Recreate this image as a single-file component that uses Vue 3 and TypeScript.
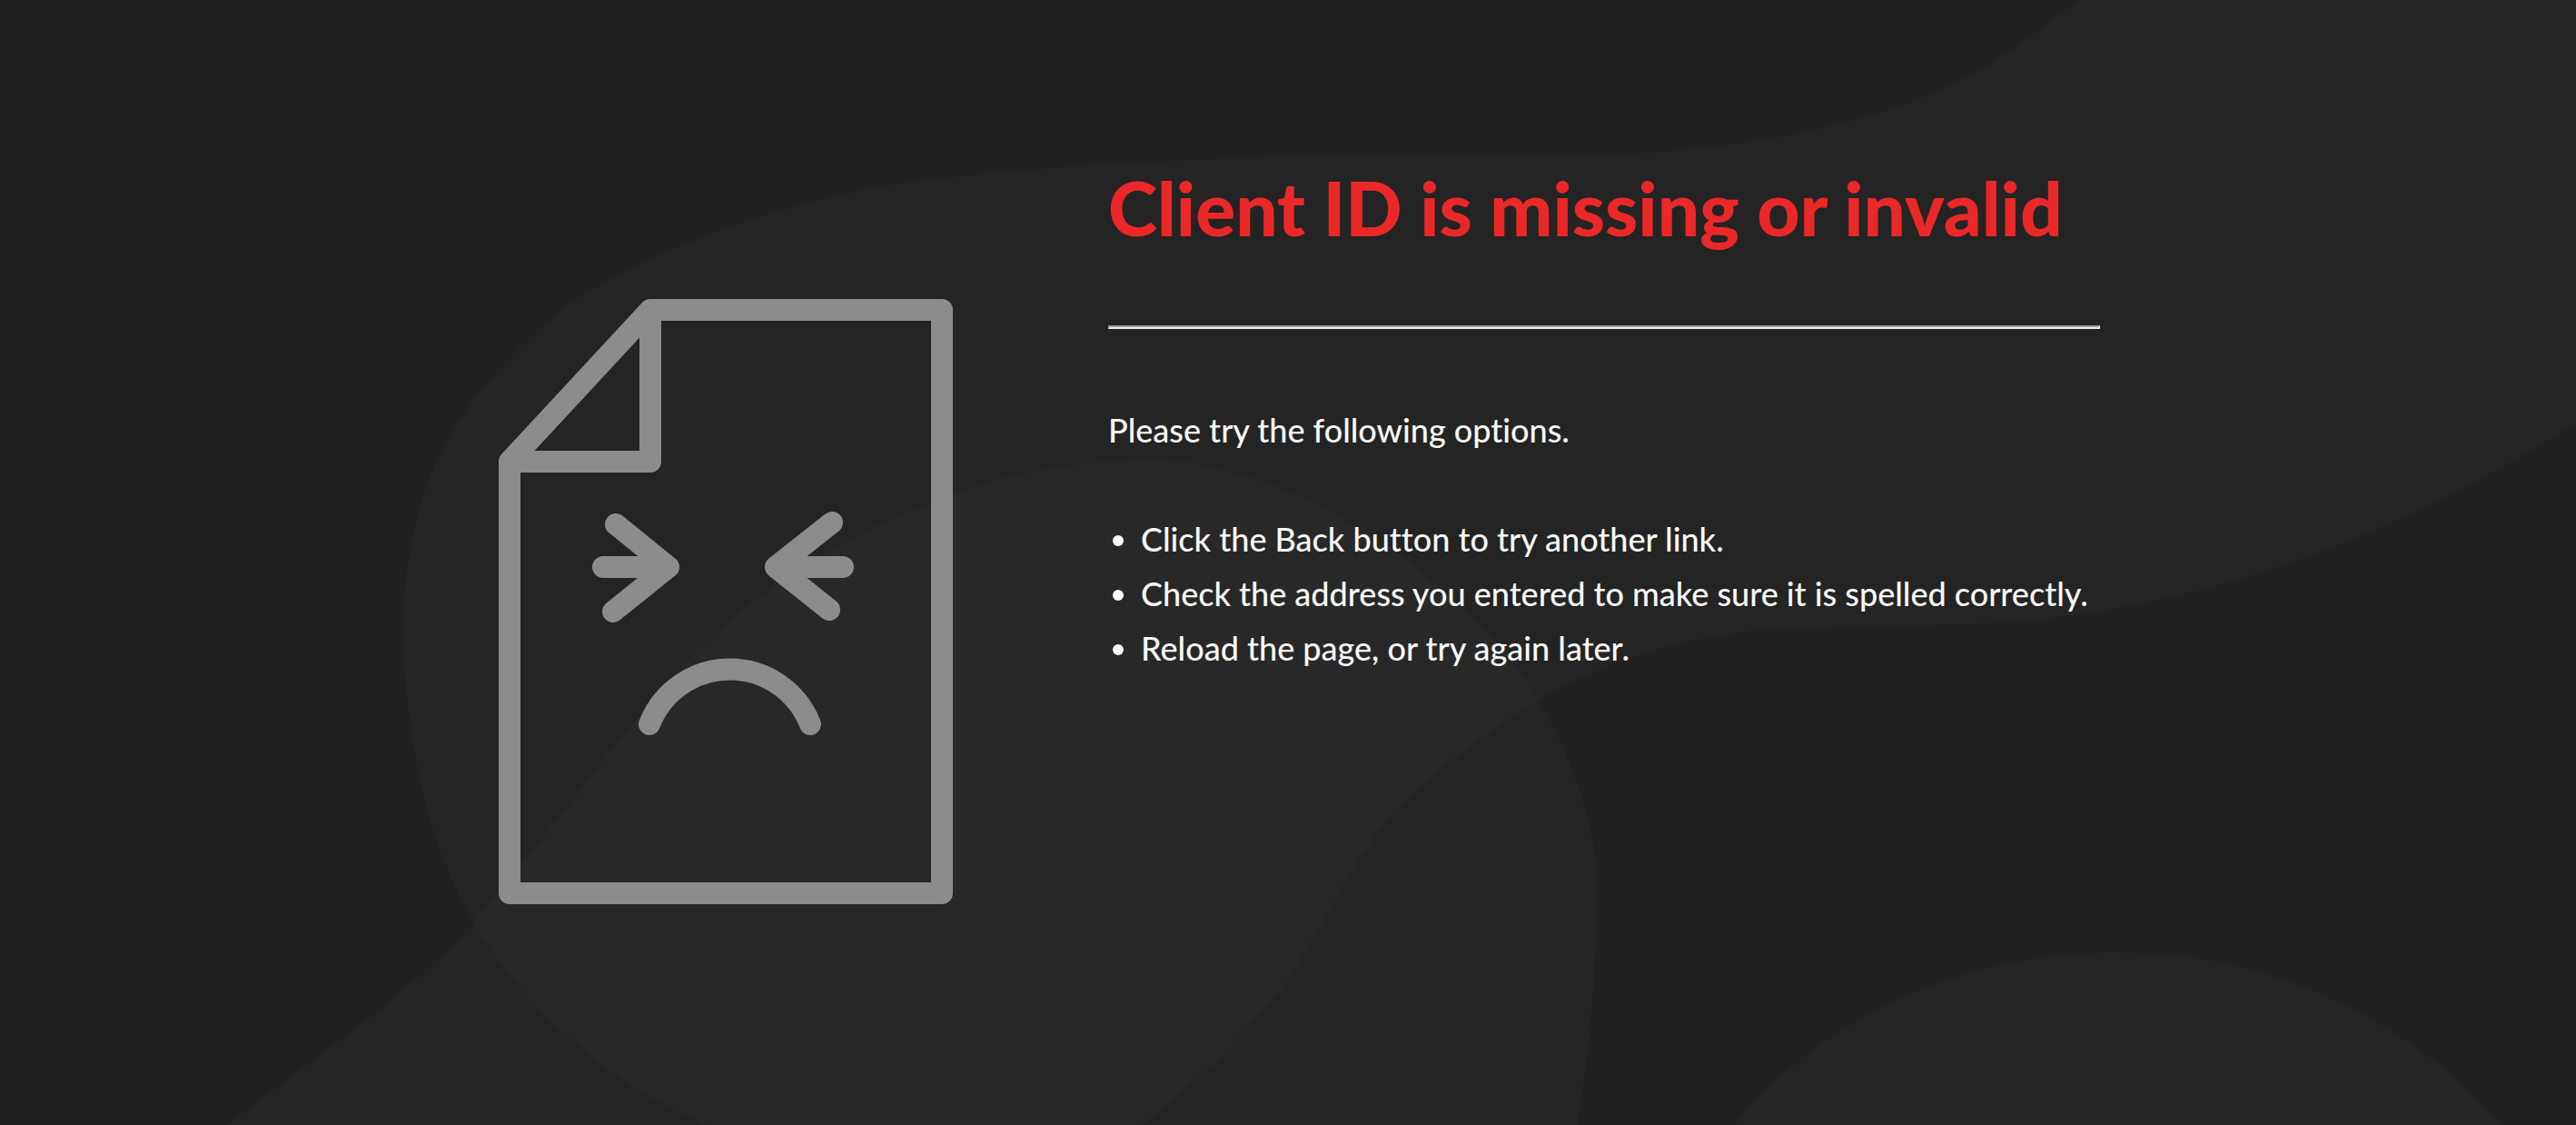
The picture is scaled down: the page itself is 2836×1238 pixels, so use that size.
<script setup lang="ts">
const title: string = 'Client ID is missing or invalid'
const intro: string = 'Please try the following options.'
const suggestions: string[] = [
  'Click the Back button to try another link.',
  'Check the address you entered to make sure it is spelled correctly.',
  'Reload the page, or try again later.',
]
</script>

<template>
  <div class="page">
    <svg class="backdrop" viewBox="0 0 2836 1238" preserveAspectRatio="xMidYMid slice" aria-hidden="true">
      <path
        d="M2288 0C2258 24 2228 46 2196 67C2130 110 2050 133 1961 150C1890 163 1815 170 1734 171C1630 173 1520 170 1418 172C1266 177 1100 184 959 207C830 233 720 275 624 335C545 400 490 470 466 545C450 595 444 645 444 695C446 810 468 920 520 1014C577 1110 680 1200 778 1238H1257C1320 1190 1370 1140 1418 1078C1460 1015 1490 945 1535 892C1580 850 1635 805 1694 770C1780 722 1870 695 1979 691C2080 686 2160 692 2259 680C2480 655 2680 565 2836 466V0Z"
      />
      <path
        d="M249 1238C344 1165 445 1100 520 1016C610 915 680 805 769 714C850 635 950 580 1049 544C1120 518 1195 506 1266 506C1360 506 1490 560 1581 643C1625 680 1665 720 1694 770C1730 835 1755 900 1758 965C1758 1060 1752 1150 1736 1238Z"
      />
      <path d="M1909 1238C2010 1115 2165 1048 2331 1048C2500 1048 2650 1120 2756 1238Z" />
    </svg>

    <main class="content">
      <div class="art">
        <svg class="sad-page" viewBox="0 0 500 666" aria-hidden="true">
          <path d="M167 12H488V654H12V179ZV179H12" />
          <path d="M129 248L187 295L126 344M115 295H187" />
          <path d="M367 246L305 295L364 342M379 295H305" />
          <path d="M166 468A95 95 0 0 1 343 468" />
        </svg>
      </div>

      <section class="message">
        <h1 class="title">{{ title }}</h1>
        <hr class="rule" />
        <p class="intro">{{ intro }}</p>
        <ul class="list">
          <li v-for="item in suggestions" :key="item">{{ item }}</li>
        </ul>
      </section>
    </main>
  </div>
</template>

<style>
body {
  margin: 0;
  background: #202020;
}
</style>

<style scoped>
.page {
  position: relative;
  min-height: 100vh;
  overflow: hidden;
  background: #202020;
  color: #f8f8f8;
  font-family: Lato, 'Noto Sans', sans-serif;
  font-size: 36px;
  font-weight: 500;
  font-variant-ligatures: none;
  line-height: 60px;
}

.backdrop {
  position: absolute;
  inset: 0;
  width: 100%;
  height: 100%;
  fill: #fff;
  fill-opacity: 0.018;
}

.content {
  position: relative;
  display: flex;
  justify-content: center;
  align-items: flex-start;
  gap: 146px;
  padding: 176px 48px 0;
}

.art {
  flex: 0 1 550px;
  padding-top: 153px;
  display: flex;
  justify-content: center;
}

.sad-page {
  width: 500px;
  max-width: 100%;
  fill: none;
  stroke: #8c8c8c;
  stroke-width: 24;
  stroke-linecap: round;
  stroke-linejoin: round;
}

.message {
  flex: 0 1 1092px;
}

.title {
  margin: 0;
  color: #eb2828;
  font-size: 82px;
  font-weight: 900;
  line-height: 104px;
}

.rule {
  margin: 78px 0 81px;
  height: 0;
  border: 2px solid;
  border-color: #9a9a9a #eee #eee #9a9a9a;
}

.intro {
  margin: 0 0 60px;
}

.list {
  margin: 0;
  padding-left: 36px;
}
</style>
